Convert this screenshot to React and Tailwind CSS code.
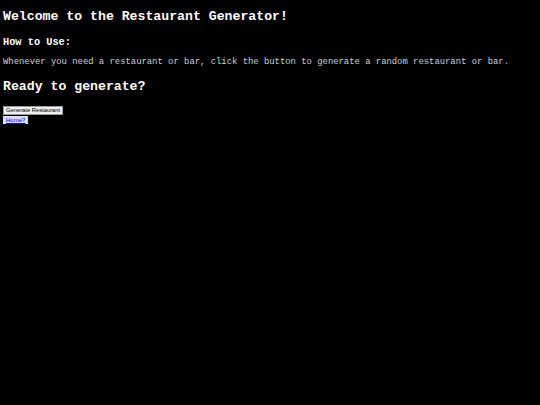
export default function App() {
  return (
    <div className="w-[540px] h-[405px] bg-black px-[3px] pt-[9px] font-['Liberation_Mono',monospace] flex flex-col items-start">
      <h2 className="text-[13.2px] leading-[15px] font-bold text-white">Welcome to the Restaurant Generator!</h2>
      <h3 className="mt-[12px] text-[10.3px] leading-[12px] font-bold text-white">How to Use:</h3>
      <p className="mt-[9px] text-[8.89px] leading-[10px] text-[#d0d0d0]">
        Whenever you need a restaurant or bar, click the button to generate a random restaurant or bar.
      </p>
      <h2 className="mt-[12px] text-[13.2px] leading-[15px] font-bold text-white">Ready to generate?</h2>
      <button className="mt-[12px] h-[9px] px-[2px] bg-[#efefef] border border-[#9a9a9a] text-black font-['Liberation_Sans',sans-serif] text-[5.8px] leading-[7px] flex items-center">
        Generate Restaurant
      </button>
      <a href="#" className="mt-[1px] h-[8px] px-[3px] bg-[#dcdcf4] text-[#0000ee] underline font-['Liberation_Sans',sans-serif] text-[6px] leading-[8px]">
        Home?
      </a>
    </div>
  );
}
